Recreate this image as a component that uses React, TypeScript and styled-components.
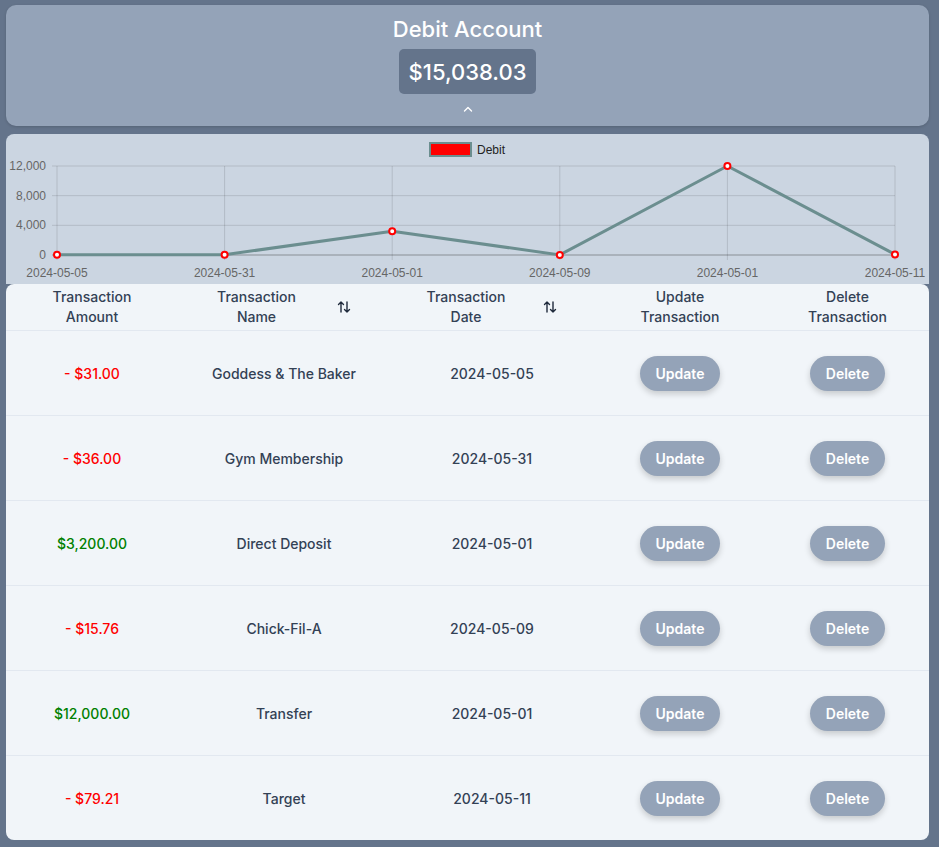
import React from "react";
import styled, { createGlobalStyle } from "styled-components";

const Global = createGlobalStyle`
  html, body { margin: 0; padding: 0; background: #64748b; }
  body { font-family: Inter, "Noto Sans", sans-serif; }
  * { box-sizing: border-box; }
`;

const Page = styled.div`
  display: flex;
  flex-direction: column;
  padding: 5px 10px 7px 6px;
  min-height: 847px;
`;

const HeaderCard = styled.div`
  background: #94a3b8;
  border-radius: 10px;
  height: 121px;
  display: flex;
  flex-direction: column;
  align-items: center;
  padding-top: 11px;
  box-shadow: 0 1px 3px rgba(0,0,0,0.15);
`;

const Title = styled.h1`
  margin: 0;
  font-size: 22px;
  line-height: 26px;
  font-weight: 500;
  color: #ffffff;
`;

const Balance = styled.div`
  margin-top: 7px;
  background: #64748b;
  border-radius: 5px;
  color: #ffffff;
  font-size: 22px;
  font-weight: 500;
  height: 45px;
  padding: 0 10px;
  display: flex;
  align-items: center;
`;

const Chevron = styled.svg`
  margin-top: 12px;
`;

const ChartCard = styled.div`
  margin-top: 8px;
  background: #cbd5e1;
  border-radius: 8px 8px 0 0;
  height: 150px;
`;

const TableCard = styled.div`
  background: #f1f5f9;
  border-radius: 8px;
  overflow: hidden;
`;

const COLS = "172px 212px 204px 172px 163px";

const HeadRow = styled.div`
  display: grid;
  grid-template-columns: ${COLS};
  height: 47px;
  border-bottom: 1px solid #e2e8f0;
`;

const HeadCell = styled.div<{ $gap?: number }>`
  display: flex;
  align-items: center;
  justify-content: center;
  gap: ${(p) => p.$gap ?? 0}px;
  color: #334155;
  font-size: 14px;
  line-height: 20px;
  font-weight: 500;
  text-align: center;
`;

const BodyRow = styled.div<{ $last?: boolean }>`
  display: grid;
  grid-template-columns: ${COLS};
  height: ${(p) => (p.$last ? 84 : 85)}px;
  border-bottom: ${(p) => (p.$last ? "none" : "1px solid #e2e8f0")};
`;

const Cell = styled.div<{ $color?: string }>`
  display: flex;
  align-items: center;
  justify-content: center;
  color: ${(p) => p.$color ?? "#334155"};
  font-size: 14px;
  font-weight: 500;
`;

const Button = styled.button<{ $w: number }>`
  width: ${(p) => p.$w}px;
  height: 35px;
  border: none;
  border-radius: 18px;
  background: #94a3b8;
  color: #ffffff;
  font-family: Inter, sans-serif;
  font-size: 14px;
  font-weight: 600;
  box-shadow: 0 3px 6px rgba(0,0,0,0.18);
  cursor: pointer;
`;

const SortIcon = () => (
  <svg width="14" height="14" viewBox="0 0 14 14" fill="none" stroke="#1e293b" strokeWidth="1.4" strokeLinecap="round" strokeLinejoin="round">
    <path d="M4 12V2M1.5 4.5L4 2l2.5 2.5" />
    <path d="M10 2v10M7.5 9.5L10 12l2.5-2.5" />
  </svg>
);

const rows = [
  { amt: "- $31.00", neg: true, name: "Goddess & The Baker", date: "2024-05-05", v: 31 },
  { amt: "- $36.00", neg: true, name: "Gym Membership", date: "2024-05-31", v: 36 },
  { amt: "$3,200.00", neg: false, name: "Direct Deposit", date: "2024-05-01", v: 3200 },
  { amt: "- $15.76", neg: true, name: "Chick-Fil-A", date: "2024-05-09", v: 15.76 },
  { amt: "$12,000.00", neg: false, name: "Transfer", date: "2024-05-01", v: 12000 },
  { amt: "- $79.21", neg: true, name: "Target", date: "2024-05-11", v: 79.21 },
];

const Chart = () => {
  const ox = 6, oy = 134;
  const x0 = 57 - ox, x1 = 895 - ox;
  const yTop = 166 - oy, yBot = 255 - oy;
  const step = (x1 - x0) / 5;
  const ys = [0, 4000, 8000, 12000];
  const yOf = (v: number) => yBot - (v / 12000) * (yBot - yTop);
  const pts = rows.map((r, i) => [x0 + i * step, yOf(r.v)]);
  const font = "'Liberation Sans', Arial, sans-serif";
  return (
    <svg width="923" height="150" viewBox="0 0 923 150">
      <rect x={430 - ox} y={143 - oy} width={41} height={13} fill="#ff0000" stroke="#6b8e8f" strokeWidth="2" />
      <text x={477 - ox} y={154 - oy} fontFamily={font} fontSize="12" fill="#222">Debit</text>
      {ys.map((v) => (
        <g key={v}>
          <line x1={x0 - 5} x2={x1} y1={yOf(v)} y2={yOf(v)} stroke="rgba(0,0,0,0.12)" strokeWidth="1" />
          <text x={x0 - 11} y={yOf(v) + 4} textAnchor="end" fontFamily={font} fontSize="12" fill="#666">
            {v.toLocaleString("en-US")}
          </text>
        </g>
      ))}
      {pts.map(([x], i) => (
        <line key={i} x1={x} x2={x} y1={yTop} y2={yBot + 5} stroke="rgba(0,0,0,0.12)" strokeWidth="1" />
      ))}
      <line x1={x0 - 5} x2={x1} y1={yBot} y2={yBot} stroke="rgba(0,0,0,0.22)" strokeWidth="1" />
      {rows.map((r, i) => (
        <text key={i} x={pts[i][0]} y={277 - oy} textAnchor="middle" fontFamily={font} fontSize="12" fill="#666">
          {r.date}
        </text>
      ))}
      <polyline points={pts.map((p) => p.join(",")).join(" ")} fill="none" stroke="#6b8e8f" strokeWidth="3" strokeLinejoin="round" />
      {pts.map(([x, y], i) => (
        <circle key={i} cx={x} cy={y} r="3" fill="#ffffff" stroke="#ff0000" strokeWidth="2" />
      ))}
    </svg>
  );
};

export default function App() {
  return (
    <>
      <Global />
      <Page>
        <HeaderCard>
          <Title>Debit Account</Title>
          <Balance>$15,038.03</Balance>
          <Chevron width="10" height="6" viewBox="0 0 10 6" fill="none" stroke="#ffffff" strokeWidth="1.4" strokeLinecap="round" strokeLinejoin="round">
            <path d="M1.5 5L5 1.5 8.5 5" />
          </Chevron>
        </HeaderCard>
        <ChartCard>
          <Chart />
        </ChartCard>
        <TableCard>
          <HeadRow>
            <HeadCell>Transaction<br />Amount</HeadCell>
            <HeadCell $gap={41}><span>Transaction<br />Name</span><SortIcon /></HeadCell>
            <HeadCell $gap={38}><span>Transaction<br />Date</span><SortIcon /></HeadCell>
            <HeadCell>Update<br />Transaction</HeadCell>
            <HeadCell>Delete<br />Transaction</HeadCell>
          </HeadRow>
          {rows.map((r, i) => (
            <BodyRow key={i} $last={i === rows.length - 1}>
              <Cell $color={r.neg ? "#ff0000" : "#008000"}>{r.amt}</Cell>
              <Cell>{r.name}</Cell>
              <Cell>{r.date}</Cell>
              <Cell><Button $w={80}>Update</Button></Cell>
              <Cell><Button $w={75}>Delete</Button></Cell>
            </BodyRow>
          ))}
        </TableCard>
      </Page>
    </>
  );
}
